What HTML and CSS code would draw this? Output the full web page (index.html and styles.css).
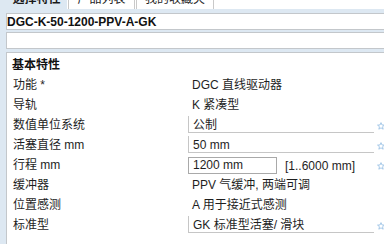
FILE: index.html
```html
<!DOCTYPE html>
<html lang="zh">
<head>
<meta charset="utf-8">
<title>DGC-K-50-1200-PPV-A-GK</title>
<link rel="stylesheet" href="styles.css">
</head>
<body>
<div class="page">
  <div class="tabs">
    <div class="tab tab-active">选择特性</div>
    <div class="tab tab-2">产品列表</div>
    <div class="tab tab-3">我的收藏夹</div>
    <div class="tab-fill"></div>
  </div>
  <div class="content">
    <div class="code-box">DGC-K-50-1200-PPV-A-GK</div>
    <div class="code-box code-empty"></div>
    <div class="panel">
      <div class="section-title">基本特性</div>
      <div class="row">
        <div class="label">功能 *</div>
        <div class="value"><span class="plain">DGC 直线驱动器</span></div>
      </div>
      <div class="row">
        <div class="label">导轨</div>
        <div class="value"><span class="plain">K 紧凑型</span></div>
      </div>
      <div class="row">
        <div class="label">数值单位系统</div>
        <div class="value"><span class="select">公制</span></div>
        <svg class="fav" viewBox="0 0 10 10"><polygon points="5,0.8 6.2,3.7 9.3,3.9 6.9,5.9 7.7,9 5,7.3 2.3,9 3.1,5.9 0.7,3.9 3.8,3.7"/></svg>
      </div>
      <div class="row">
        <div class="label">活塞直径 mm</div>
        <div class="value"><span class="select">50 mm</span></div>
        <svg class="fav" viewBox="0 0 10 10"><polygon points="5,0.8 6.2,3.7 9.3,3.9 6.9,5.9 7.7,9 5,7.3 2.3,9 3.1,5.9 0.7,3.9 3.8,3.7"/></svg>
      </div>
      <div class="row row-input">
        <div class="label">行程 mm</div>
        <div class="value value-input"><span class="input">1200 mm</span><span class="range">[1..6000 mm]</span></div>
        <svg class="fav" viewBox="0 0 10 10"><polygon points="5,0.8 6.2,3.7 9.3,3.9 6.9,5.9 7.7,9 5,7.3 2.3,9 3.1,5.9 0.7,3.9 3.8,3.7"/></svg>
      </div>
      <div class="row">
        <div class="label">缓冲器</div>
        <div class="value"><span class="plain">PPV 气缓冲, 两端可调</span></div>
      </div>
      <div class="row">
        <div class="label">位置感测</div>
        <div class="value"><span class="plain">A 用于接近式感测</span></div>
      </div>
      <div class="row">
        <div class="label">标准型</div>
        <div class="value"><span class="select">GK 标准型活塞/ 滑块</span></div>
        <svg class="fav" viewBox="0 0 10 10"><polygon points="5,0.8 6.2,3.7 9.3,3.9 6.9,5.9 7.7,9 5,7.3 2.3,9 3.1,5.9 0.7,3.9 3.8,3.7"/></svg>
      </div>
    </div>
  </div>
</div>
</body>
</html>
```
FILE: styles.css
```css
html, body {
  margin: 0;
  padding: 0;
  width: 384px;
  height: 244px;
  overflow: hidden;
  background: #dde8f2;
  font-family: "Liberation Sans", Arial, "Noto Sans CJK SC", sans-serif;
  font-size: 12px;
  color: #1e1e1e;
}

.page {
  padding-left: 6px;
  width: 600px;
}

.tabs {
  display: flex;
  height: 18px;
  margin-top: -9px;
  background: #ffffff;
}

.tab {
  box-sizing: border-box;
  height: 18px;
  line-height: 16px;
  text-align: center;
  white-space: nowrap;
  background: #ffffff;
}

.tab-active {
  width: 61px;
  background: #dde8f2;
  font-weight: bold;
  color: #1a1a1a;
}

.tab-2 {
  width: 67px;
  margin-left: 1px;
  border-left: 1px solid #c9c9c9;
  border-right: 1px solid #c9c9c9;
}

.tab-3 {
  width: 78px;
  margin-left: 1px;
  border-left: 1px solid #c9c9c9;
  border-right: 1px solid #c9c9c9;
}

.tab-fill {
  flex: 1;
}

.content {
  padding-top: 4px;
}

.code-box {
  box-sizing: border-box;
  height: 17px;
  border: 1px solid #c3c7cb;
  background: #ffffff;
  padding: 1px 0 0 0;
  line-height: 15px;
  font-weight: bold;
  color: #111;
  white-space: nowrap;
}

.code-empty {
  margin-top: 2px;
}

.panel {
  margin-top: 3px;
  background: #ffffff;
  border-top: 1px solid #c3c7cb;
  border-left: 1px solid #c3c7cb;
  padding-top: 2px;
  height: 200px;
}

.section-title {
  height: 20px;
  line-height: 20px;
  padding-left: 5px;
  font-weight: bold;
  color: #111;
}

.row {
  display: flex;
  align-items: flex-start;
  height: 20px;
  line-height: 20px;
}

.label {
  width: 181px;
  padding-left: 6px;
  box-sizing: border-box;
  white-space: nowrap;
}

.value {
  width: 186px;
  white-space: nowrap;
}

.plain {
  display: block;
  padding-left: 4px;
}

.select {
  display: block;
  box-sizing: border-box;
  height: 17px;
  margin-top: 1px;
  padding: 3px 0 0 4px;
  line-height: 13px;
  border-left: 1px solid #c6c6c6;
  border-bottom: 1px solid #c6c6c6;
}

.value-input {
  display: flex;
}

.input {
  box-sizing: border-box;
  width: 89px;
  height: 17px;
  margin-top: 2px;
  padding: 1px 0 0 4px;
  line-height: 13px;
  border: 1px solid #a9a9a9;
}

.range {
  margin-left: 8px;
  margin-top: 1px;
}

.fav {
  width: 8px;
  height: 8px;
  margin-left: 3px;
  margin-top: 7px;
  fill: none;
  stroke: #92bde3;
  stroke-width: 1;
}
```
